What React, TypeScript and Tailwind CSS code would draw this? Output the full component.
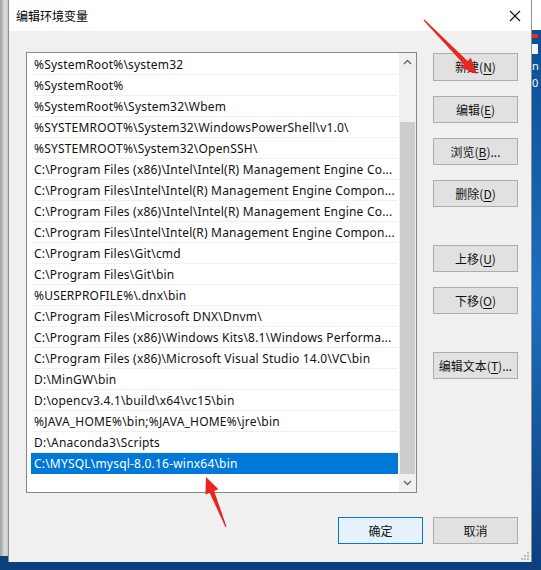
import React from 'react';

const paths = [
  '%SystemRoot%\\system32',
  '%SystemRoot%',
  '%SystemRoot%\\System32\\Wbem',
  '%SYSTEMROOT%\\System32\\WindowsPowerShell\\v1.0\\',
  '%SYSTEMROOT%\\System32\\OpenSSH\\',
  'C:\\Program Files (x86)\\Intel\\Intel(R) Management Engine Co...',
  'C:\\Program Files\\Intel\\Intel(R) Management Engine Compon...',
  'C:\\Program Files (x86)\\Intel\\Intel(R) Management Engine Co...',
  'C:\\Program Files\\Intel\\Intel(R) Management Engine Compon...',
  'C:\\Program Files\\Git\\cmd',
  'C:\\Program Files\\Git\\bin',
  '%USERPROFILE%\\.dnx\\bin',
  'C:\\Program Files\\Microsoft DNX\\Dnvm\\',
  'C:\\Program Files (x86)\\Windows Kits\\8.1\\Windows Performa...',
  'C:\\Program Files (x86)\\Microsoft Visual Studio 14.0\\VC\\bin',
  'D:\\MinGW\\bin',
  'D:\\opencv3.4.1\\build\\x64\\vc15\\bin',
  '%JAVA_HOME%\\bin;%JAVA_HOME%\\jre\\bin',
  'D:\\Anaconda3\\Scripts',
  'C:\\MYSQL\\mysql-8.0.16-winx64\\bin',
];

const cjk = "font-['Microsoft_YaHei','Noto_Sans_CJK_SC',sans-serif]";

function WinButton({
  label,
  hotkey,
  suffix = '',
  className = '',
  primary = false,
}: {
  label: string;
  hotkey?: string;
  suffix?: string;
  className?: string;
  primary?: boolean;
}) {
  return (
    <div
      className={`h-[27px] w-[85px] flex items-center justify-center text-[12px] text-[#111] ${cjk} border ${
        primary ? 'bg-[#e5f1fb] border-[#0078d7]' : 'bg-[#e1e1e1] border-[#adadad]'
      } ${className}`}
    >
      <span>
        {label}
        {hotkey && (
          <>
            (<span className="underline underline-offset-2">{hotkey}</span>)
          </>
        )}
        {suffix}
      </span>
    </div>
  );
}

export default function App() {
  return (
    <div className="relative w-[541px] h-[570px] overflow-hidden flex bg-[#0d3f7c]">
      {/* window behind, left edge */}
      <div className="w-[8px] h-[556px] bg-gradient-to-r from-[#bdbdbd] via-[#dcdcdc] to-[#c9c9c9] border-l-2 border-[#a9a9a9]" />

      {/* dialog */}
      <div className="w-[524px] h-[562px] flex flex-col bg-[#f0f0f0] border-x border-[#8e8e8e]">
        <div className="h-[31px] bg-white flex items-center justify-between pl-[7px] pr-[7px]">
          <span className={`text-[12px] text-black ${cjk}`}>编辑环境变量</span>
          <svg width="12" height="12" viewBox="0 0 12 12" className="mr-[3px]">
            <path d="M1 1 L11 11 M11 1 L1 11" stroke="#111" strokeWidth="1.1" />
          </svg>
        </div>

        <div className="relative flex-1 pt-[21px] pl-[17px] pr-[13px]">
          <div className="flex gap-[16px]">
            {/* list box */}
            <div className="w-[391px] h-[441px] border border-[#828790] bg-white flex">
              <div className="flex-1 pt-[1px] pl-[4px] pr-[1px] font-['Segoe_UI','Noto_Sans',sans-serif] text-[12px] tracking-[0.2px]">
                {paths.map((p, i) => {
                  const sel = i === paths.length - 1;
                  return (
                    <div
                      key={i}
                      className={`h-[21px] leading-[22px] pl-[3px] whitespace-nowrap overflow-hidden border-b ${
                        sel ? 'bg-[#0078d7] text-white border-[#0078d7]' : 'text-[#111] border-[#f0f0f0]'
                      }`}
                    >
                      {p}
                    </div>
                  );
                })}
              </div>
              {/* scrollbar */}
              <div className="w-[17px] bg-[#f0f0f0] flex flex-col">
                <div className="h-[17px] flex items-center justify-center">
                  <svg width="9" height="6" viewBox="0 0 9 6">
                    <path d="M1 5 L4.5 1.5 L8 5" stroke="#606060" strokeWidth="1.3" fill="none" />
                  </svg>
                </div>
                <div className="h-[52px]" />
                <div className="mx-[1px] h-[352px] bg-[#cdcdcd]" />
                <div className="flex-1 flex items-center justify-center">
                  <svg width="9" height="6" viewBox="0 0 9 6">
                    <path d="M1 1 L4.5 4.5 L8 1" stroke="#606060" strokeWidth="1.3" fill="none" />
                  </svg>
                </div>
              </div>
            </div>

            {/* side buttons */}
            <div className="flex flex-col">
              <WinButton label="新建" hotkey="N" className="mt-[1px] h-[28px]" />
              <WinButton label="编辑" hotkey="E" className="mt-[15px]" />
              <WinButton label="浏览" hotkey="B" suffix="..." className="mt-[15px]" />
              <WinButton label="删除" hotkey="D" className="mt-[15px]" />
              <WinButton label="上移" hotkey="U" className="mt-[38px]" />
              <WinButton label="下移" hotkey="O" className="mt-[15px]" />
              <WinButton label="编辑文本" hotkey="T" suffix="..." className="mt-[38px]" />
            </div>
          </div>

          <div className="flex justify-end gap-[10px] mt-[24px]">
            <WinButton label="确定" primary />
            <WinButton label="取消" />
          </div>

          {/* resize grip */}
          <svg width="8" height="8" viewBox="0 0 8 8" className="absolute right-[2px] bottom-[2px]">
            <rect x="6" y="0" width="2" height="2" fill="#bcbcbc" />
            <rect x="3" y="3" width="2" height="2" fill="#bcbcbc" />
            <rect x="6" y="3" width="2" height="2" fill="#bcbcbc" />
            <rect x="0" y="6" width="2" height="2" fill="#bcbcbc" />
            <rect x="3" y="6" width="2" height="2" fill="#bcbcbc" />
            <rect x="6" y="6" width="2" height="2" fill="#bcbcbc" />
          </svg>
        </div>
      </div>

      {/* desktop on the right */}
      <div className="flex-1 flex flex-col">
        <div className="h-[30px] bg-white" />
        <div className="flex-1 bg-gradient-to-b from-[#0b4d96] via-[#1c6fc0] to-[#0c3f7c] flex flex-col pt-[4px] gap-[6px] text-[11px] text-white font-['Noto_Sans',sans-serif] leading-none">
          <div className="w-[6px] h-[4px] bg-[#d33]" />
          <div className="w-[6px] h-[10px] bg-[#f4f4f4]" />
          <span>n</span>
          <span>0</span>
        </div>
      </div>

      {/* annotation arrows */}
      <svg className="absolute left-0 top-0 pointer-events-none" width="541" height="570">
        <polygon
          points="423.6,20.4 464,64.4 460.8,67.5 477,74 470.8,57.7 467.6,60.9 424.4,19.6"
          fill="#e8261f"
        />
        <polygon
          points="225.5,527.2 209.6,492.7 205.4,494.4 206,477 218.4,489.2 214.2,490.9 226.5,526.8"
          fill="#e8261f"
        />
      </svg>
    </div>
  );
}
